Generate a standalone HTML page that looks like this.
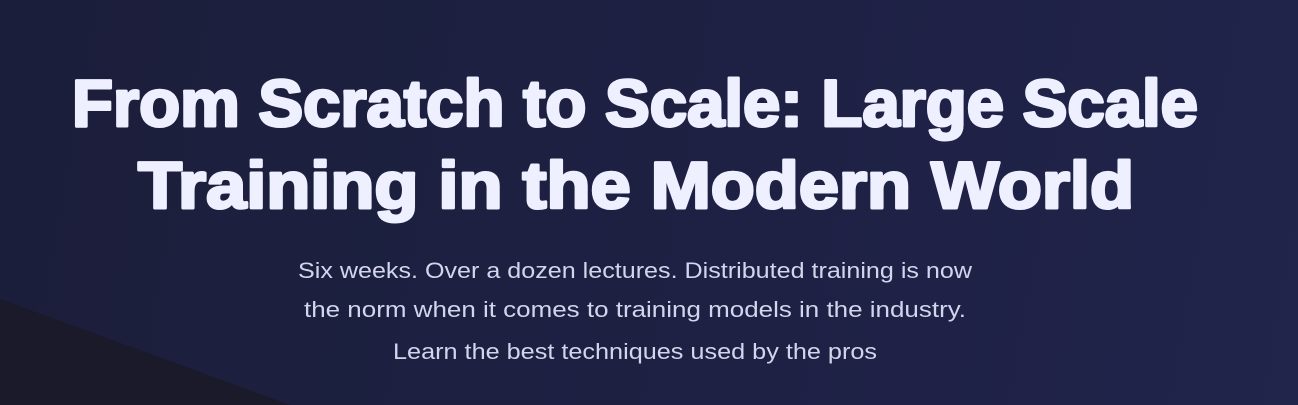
<!DOCTYPE html>
<html><head><meta charset="utf-8"><style>
html,body{margin:0;padding:0}
body{width:1298px;height:405px;overflow:hidden;background:linear-gradient(100deg,#1b1e3a 0%,#1e2144 60%,#21244b 100%);position:relative;font-family:"Liberation Sans",sans-serif}
svg{position:absolute;left:0;top:0}
</style></head><body>
<svg width="1298" height="405" viewBox="0 0 1298 405">
<polygon points="0,299 290,405 0,405" fill="#1a1a2a"/>
<g font-family="Liberation Sans, sans-serif" font-weight="bold" font-size="66" fill="#eef0ff" stroke="#eef0ff" stroke-width="3" stroke-linejoin="round">
<text x="72" y="126" textLength="1126" lengthAdjust="spacingAndGlyphs">From Scratch to Scale: Large Scale</text>
<text x="138" y="208" textLength="996" lengthAdjust="spacingAndGlyphs">Training in the Modern World</text>
</g>
<g font-family="Liberation Sans, sans-serif" font-size="22" fill="#d2d5ec">
<text x="298" y="278" textLength="674" lengthAdjust="spacingAndGlyphs">Six weeks. Over a dozen lectures. Distributed training is now</text>
<text x="304" y="317" textLength="662" lengthAdjust="spacingAndGlyphs">the norm when it comes to training models in the industry.</text>
<text x="393" y="359" textLength="484" lengthAdjust="spacingAndGlyphs">Learn the best techniques used by the pros</text>
</g>
</svg>
</body></html>
